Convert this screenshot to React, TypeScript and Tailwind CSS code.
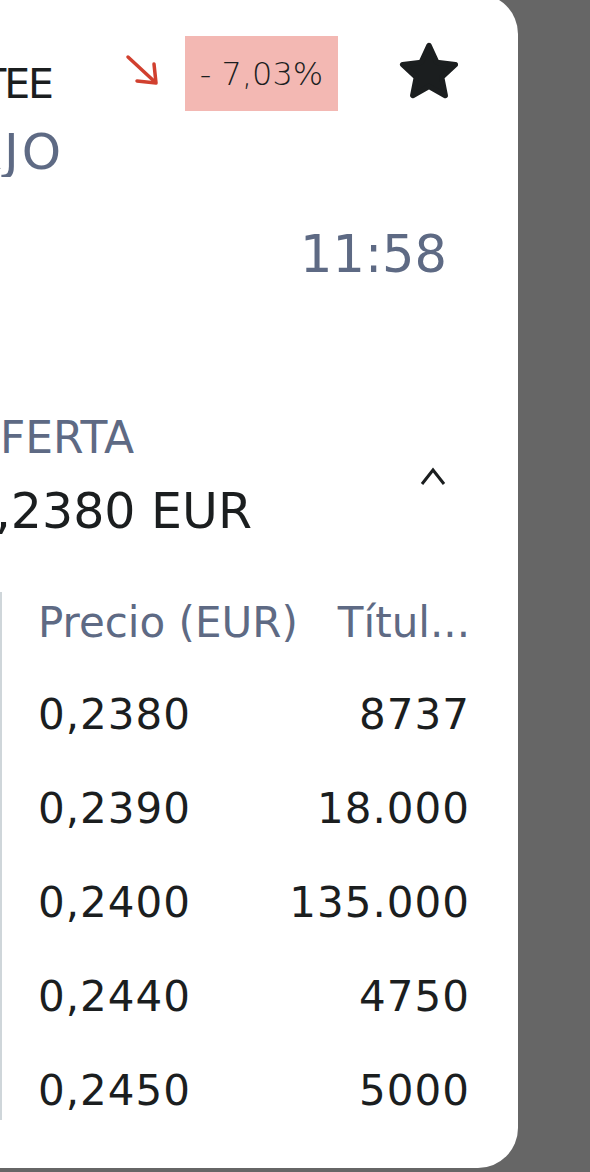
import React from "react";

const rows = [
  { price: "0,2380", qty: "8737" },
  { price: "0,2390", qty: "18.000" },
  { price: "0,2400", qty: "135.000" },
  { price: "0,2440", qty: "4750" },
  { price: "0,2450", qty: "5000" },
];

// filled star with rounded tips
const StarIcon = () => (
  <svg viewBox="0 0 60 60" className="w-[64px] h-[64px]">
    <polygon
      points="30,6 37.35,21.89 54.73,23.97 41.89,35.86 45.28,53.03 30,44.5 14.72,53.03 18.11,35.86 5.27,23.97 22.65,21.89"
      fill="#1b1e1f"
      stroke="#1b1e1f"
      strokeWidth="5"
      strokeLinejoin="round"
    />
  </svg>
);

const DownArrow = () => (
  <svg viewBox="0 0 34 32" className="w-[34px] h-[32px]">
    <line x1="3" y1="3" x2="30" y2="28" stroke="#d1402f" strokeWidth="3.5" strokeLinecap="round" />
    <polyline
      points="12,27 31,29 29,10"
      fill="none"
      stroke="#d1402f"
      strokeWidth="3.5"
      strokeLinecap="round"
      strokeLinejoin="round"
    />
  </svg>
);

const App = () => {
  return (
    <div className="h-[1172px] w-full overflow-hidden bg-[#666666]">
      <div className="-mt-[6px] h-[1174px] w-[518px] overflow-hidden rounded-r-[40px] bg-white pt-[6px] font-['DejaVu_Sans',sans-serif]">
        {/* title row - name, change, favourite */}
        <div className="flex items-start">
          <div className="mt-[64px] flex w-[52px] justify-end overflow-hidden whitespace-nowrap text-[41px] leading-none tracking-[-2px] text-[#1b1e1f]">
            TEE
          </div>
          <div className="ml-[73px] mt-[54px]">
            <DownArrow />
          </div>
          <div className="ml-[26px] mt-[36px] flex h-[75px] w-[153px] items-center justify-center bg-[#f3b8b3] text-[32px] font-light leading-none text-[#1b1e1f]">
            - 7,03%
          </div>
          <div className="ml-[59px] mt-[39px]">
            <StarIcon />
          </div>
        </div>

        <div className="mt-[16px] flex w-[64px] justify-end overflow-hidden whitespace-nowrap text-[50px] leading-none tracking-[3px] text-[#5e6a84]">
          BAJO
        </div>

        <div className="mt-[52px] flex justify-end pr-[71px] text-[51px] leading-none text-[#5e6a84]">
          11:58
        </div>

        {/* oferta block */}
        <div className="mt-[136px] flex items-start justify-between pr-[70px]">
          <div className="flex flex-col">
            <div className="flex w-[134px] justify-end overflow-hidden whitespace-nowrap text-[44px] leading-none text-[#5e6a84]">
              OFERTA
            </div>
            <div className="mt-[27px] flex w-[252px] justify-end overflow-hidden whitespace-nowrap text-[49px] leading-none text-[#1b1e1f]">
              0,2380 EUR
            </div>
          </div>
          <svg viewBox="0 0 30 22" className="mt-[50px] h-[22px] w-[30px]">
            <polyline
              points="4,18 15,4 26,18"
              fill="none"
              stroke="#1b1e1f"
              strokeWidth="3"
              strokeLinejoin="miter"
            />
          </svg>
        </div>

        {/* order book table */}
        <div className="mt-[56px] h-[528px] border-l-2 border-[#cfd6da] pl-[36px]">
          <div className="mb-[14px] flex h-[62px] w-[432px] items-center justify-between text-[42px] leading-none text-[#5e6a84]">
            <span>Precio (EUR)</span>
            <span>Títul...</span>
          </div>
          {rows.map((r) => (
            <div
              key={r.price}
              className="flex h-[94px] w-[432px] items-center justify-between text-[42px] leading-none tracking-[1px] text-[#1b1e1f]"
            >
              <span>{r.price}</span>
              <span>{r.qty}</span>
            </div>
          ))}
        </div>
      </div>
    </div>
  );
};

export default App;
